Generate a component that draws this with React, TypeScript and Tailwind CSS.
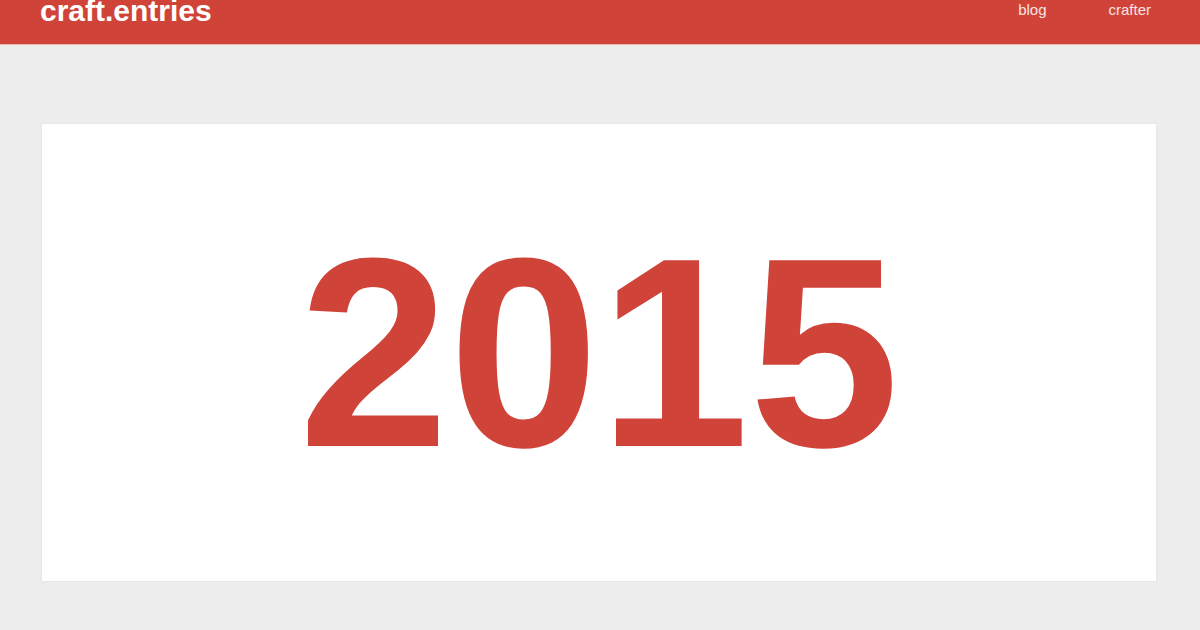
const NAV = ['blog', 'crafter']

export default function App() {
  return (
    <div className="flex h-[630px] w-[1200px] flex-col overflow-hidden bg-[#ededed] font-['Liberation_Sans',Arial,sans-serif]">
      {/* Top bar */}
      <header className="flex h-[45px] shrink-0 items-start justify-between border-b border-[#eeb8b0] bg-[#d04339] pl-[40px] pr-[49px]">
        <a className="-mt-[4px] text-[30px] font-bold leading-none text-white">craft.entries</a>
        <nav className="mt-[2px] flex gap-[62px]">
          {NAV.map(item => (
            <a key={item} className="text-[15px] leading-none text-[#fbe5e2]">
              {item}
            </a>
          ))}
        </nav>
      </header>

      {/* Year card */}
      <main className="px-[42px] pt-[79px]">
        <section className="flex h-[457px] w-[1114px] items-center justify-center bg-white shadow-[0_0_2px_rgba(0,0,0,0.08)]">
          <h1 className="text-[270px] font-bold leading-none text-[#d04339]">2015</h1>
        </section>
      </main>
    </div>
  )
}
